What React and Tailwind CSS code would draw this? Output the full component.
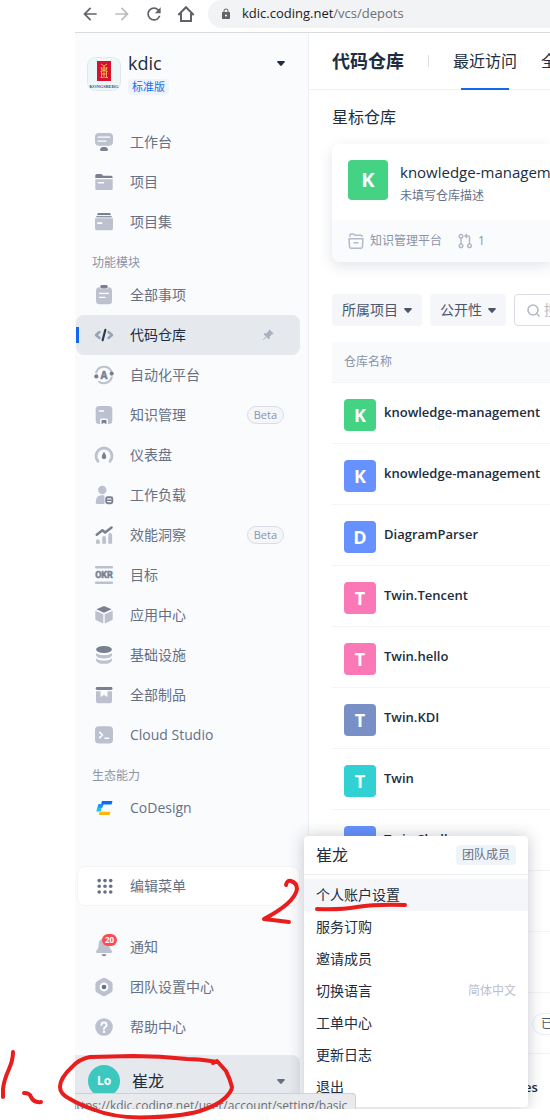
import React from "react";
import { MdArrowBack, MdArrowForward, MdRefresh, MdLock } from "react-icons/md";
import { BsPinAngleFill } from "react-icons/bs";

const L = "#bbc1ce";
const D = "#788091";

function Icon({ children }) {
  return (
    <svg viewBox="0 0 20 20" className="size-5 shrink-0" fill="none" strokeLinecap="round" strokeLinejoin="round" aria-hidden="true">
      {children}
    </svg>
  );
}

const icons = {
  desk: (
    <Icon>
      <rect x="1" y="1" width="18" height="12.7" rx="4" fill={L} />
      <path d="M4 5.2h12M4 9.2h8" stroke="#fff" strokeWidth="1.2" />
      <path d="M8.5 15h3q2.5.6 2.5 2.6 0 1.4-1.6 1.4H7.6Q6 19 6 17.6 6 15.600 8.500 15z" fill={D} />
    </Icon>
  ),
  folder: (
    <Icon>
      <path d="M1.300 3.500Q1.300 2 2.800 2h4.200q.8 0 1.300.8t1.300.9h7.600q1.500 0 1.500 2.300H1.300z" fill={D} />
      <path d="M1.300 7.300h17.400v9.200q0 1.500-1.500 1.500H2.800q-1.500 0-1.500-1.500z" fill={L} />
      <path d="M4.500 10.700h5" stroke="#fff" strokeWidth="1.600" />
    </Icon>
  ),
  folders: (
    <Icon>
      <path d="M4 .9h12l1 2H3z" fill={D} />
      <path d="M2.300 3.900h15.400v1.500H2.300z" fill="#8f96a6" />
      <path d="M1 6.300h18v10.200q0 1.700-1.500 1.700h-15Q1 18.200 1 16.500z" fill={L} />
      <path d="M4 11.200h3.500" stroke="#fff" strokeWidth="1.800" />
    </Icon>
  ),
  clipboard: (
    <Icon>
      <rect x="2" y="2.300" width="16" height="17" rx="3.500" fill={L} />
      <rect x="5.600" y="-.5" width="8.800" height="4.600" rx="2" fill="#fafbfd" />
      <rect x="6.300" y="0" width="7.400" height="3.400" rx="1.400" fill={D} />
      <path d="M5.500 8.300h9M5.500 12.300h5.500" stroke="#fff" strokeWidth="1.300" />
    </Icon>
  ),
  code: (
    <Icon>
      <path d="M5.500 7L2 10l3.500 3M14.500 7l3.500 3-3.500 3" stroke="#9aa2b3" strokeWidth="2.500" />
      <path d="M11.400 4.800l-2.800 10.400" stroke="#2f3a50" strokeWidth="2.200" />
    </Icon>
  ),
  auto: (
    <Icon>
      <path d="M2.200 7.300A8.200 8.200 0 0 1 17.300 6.200M17.800 12.300A8.200 8.200 0 0 1 5.300 16.800" stroke={L} strokeWidth="2.100" />
      <circle cx="2.300" cy="11.400" r="2.100" fill={D} />
      <circle cx="17.700" cy="8.600" r="2.100" fill={D} />
      <text x="10" y="13.600" textAnchor="middle" fontSize="10" fontWeight="700" fill={D} stroke={D} strokeWidth=".5" className="font-['Open_Sans',sans-serif]">A</text>
    </Icon>
  ),
  book: (
    <Icon>
      <rect x="1.700" y="1" width="16.600" height="18" rx="3.500" fill={L} />
      <path d="M5.500 6h4" stroke="#fff" strokeWidth="1.600" />
      <path d="M6 19.500v-4.500q0-1.500 1.500-1.500h5q1.500 0 1.500 1.500v4.500z" fill="#fafbfd" />
      <path d="M7.600 15h4.800v4.300l-2.400-1.500-2.400 1.500z" fill={D} />
    </Icon>
  ),
  gauge: (
    <Icon>
      <path d="M4 16.300A8 8 0 1 1 16 16.300" stroke={L} strokeWidth="2.800" />
      <path d="M10 6.600c.9 2 2.200 3.700 2.200 5.300a2.200 2.200 0 0 1-4.400 0c0-1.600 1.300-3.300 2.200-5.300z" fill={D} />
    </Icon>
  ),
  workload: (
    <Icon>
      <circle cx="8.300" cy="5" r="4.200" fill={L} />
      <path d="M1.700 17.500q0-7.200 6-7.200h1.800q1 0 1 1V19H3.200q-1.500 0-1.500-1.500z" fill={L} />
      <rect x="12.200" y="12.200" width="6.100" height="6.100" rx="1.500" stroke={D} strokeWidth="1.900" />
      <path d="M13.500 15.200h3.500" stroke={D} strokeWidth="1.500" />
    </Icon>
  ),
  insight: (
    <Icon>
      <path d="M2.700 9.700l5.700-4.500 2.700 2.300 6.500-5" stroke={D} strokeWidth="2.500" />
      <path d="M2 16q0-1.800 1.900-1.800T5.800 16v2.700H2zM8.200 13q0-2 1.900-2t1.900 2v5.700H8.200zM14.300 10q0-2 1.900-2t1.900 2v8.700h-3.800z" fill={L} />
    </Icon>
  ),
  okr: (
    <Icon>
      <rect x="1" y="1" width="18" height="2.600" rx="1" fill={L} />
      <rect x="1" y="16.400" width="18" height="2.600" rx="1" fill={L} />
      <text x="10" y="13.300" textAnchor="middle" fontSize="9" fontWeight="700" fill={D} stroke={D} strokeWidth=".5" className="font-['Roboto',sans-serif]">OKR</text>
    </Icon>
  ),
  cube: (
    <Icon>
      <path d="M10 1l7.600 3.300L10 7.700 2.400 4.300z" fill={D} />
      <path d="M1.300 5.800L9.300 9.300v9.200l-7.200-3.300q-.8-.4-.8-1.300zM18.700 5.800l-8 3.500v9.200l7.200-3.300q.8-.4.8-1.300z" fill={L} />
    </Icon>
  ),
  database: (
    <Icon>
      <ellipse cx="10" cy="4.500" rx="8" ry="3.500" fill={D} />
      <path d="M2 8.300q3 2 8 2t8-2v1.900q-1.500 3.300-8 3.300T2 10.200zM2 13.500q3 2.300 8 2.300t8-2.300v1.900q-1.500 3.400-8 3.400t-8-3.400z" fill={L} />
    </Icon>
  ),
  artifact: (
    <Icon>
      <rect x="1.700" y="2" width="16.800" height="3" rx="1.400" fill={D} />
      <path d="M2 6.200h4.500v5.300q0 .8.700.3L10 9.700l2.800 2.100q.7.500.7-.3V6.200H18v10.100q0 2-2 2H4q-2 0-2-2z" fill={L} />
    </Icon>
  ),
  terminal: (
    <Icon>
      <rect x="1" y="1.200" width="18" height="17.400" rx="3.800" fill={L} />
      <path d="M5.700 7.300L8.500 10l-2.800 2.700M11 13.300h3.500" stroke="#fff" strokeWidth="1.600" />
    </Icon>
  ),
  codesign: (
    <Icon>
      <path d="M8 3h10.500l-1 3.600H7z" fill="#0a6cff" />
      <path d="M4.500 6h5.200L8.200 10H3.400z" fill="#1f8cff" />
      <path d="M3.200 9.500h4.500l-1 4H2.300z" fill="#14c8f5" />
      <path d="M5.500 13.700h11l-1 3.400H4.700z" fill="#ffb80c" />
    </Icon>
  ),
  grid: (
    <Icon>
      {[4.600, 10.300, 16].map((y) => [5.200, 11, 16.700].map((x) => <circle key={x + "-" + y} cx={x} cy={y} r="1.800" fill="#667085" />))}
    </Icon>
  ),
  bell: (
    <Icon>
      <path d="M10 1.500c-3.300 0-5.300 2.500-5.300 5.500 0 3.500-.7 5-2.200 6.500-1 1.100-.8 2.500.8 2.500h13.400c1.600 0 1.800-1.400.8-2.500-1.500-1.500-2.200-3-2.200-6.500 0-3-2-5.500-5.300-5.500z" fill={L} />
      <path d="M7.500 17.200h5q-.5 2.100-2.500 2.100t-2.500-2.100z" fill={D} />
    </Icon>
  ),
  hex: (
    <Icon>
      <path d="M8.400 1.300q1.600-.9 3.200 0l5.400 3q1.600.9 1.600 2.700v6q0 1.800-1.600 2.700l-5.400 3q-1.600.9-3.200 0l-5.400-3Q1.400 14.800 1.400 13V7q0-1.800 1.600-2.700z" fill={L} />
      <circle cx="10" cy="10" r="4.400" fill="#fff" />
      <circle cx="10" cy="10" r="2.300" fill="#667085" />
    </Icon>
  ),
  help: (
    <Icon>
      <circle cx="10" cy="10" r="8.800" fill={L} />
      <path d="M7.400 8q0-2.500 2.600-2.500T12.600 8q0 1.200-1.300 2T10 12" stroke="#fff" strokeWidth="1.900" />
      <circle cx="10" cy="14.700" r="1.200" fill="#fff" />
    </Icon>
  ),
};

function Caret({ className }) {
  return (
    <svg viewBox="0 0 8 5" className={"h-[5px] w-2 shrink-0 " + className} fill="currentColor" aria-hidden="true">
      <path d="M1 0h6q1.300.2.600 1.200L4.800 4.600q-.8.700-1.600 0L.4 1.200Q-.3.200 1 0z" />
    </svg>
  );
}

function NavItem({ icon, label, active, beta, badge }) {
  return (
    <a
      href="#"
      className={
        "relative mr-2 ml-px flex h-10 shrink-0 items-center rounded-lg pr-4 pl-[18px] text-sm " +
        (active ? "bg-[#e5e8ed] text-[#202d40]" : "text-[#667085]")
      }
    >
      {active && <span className="absolute top-3 left-0 h-4 w-[3px] bg-[#1268ec]" />}
      {icons[icon]}
      {badge && (
        <span className="absolute top-[7px] left-[26px] h-3 rounded-full bg-[#ff4b50] px-[3px] text-[8px] leading-3 font-bold text-white">{badge}</span>
      )}
      <span className="ml-4 flex-1">{label}</span>
      {active && <BsPinAngleFill className="mr-2.5 size-3 text-[#a9b1c0]" />}
      {beta && (
        <span className="rounded-full border border-[#dadde5] bg-[#f5f6fa] px-1.5 text-[11px] leading-4 text-[#8b93a7]">Beta</span>
      )}
    </a>
  );
}

function NavLabel({ children }) {
  return <h2 className="h-[33px] shrink-0 pt-[13px] pl-[17px] text-xs leading-4 text-[#8b93a7]">{children}</h2>;
}

function TeamLogo() {
  return (
    <svg viewBox="0 0 34 34" className="size-[34px] shrink-0" aria-hidden="true">
      <rect x=".5" y=".5" width="33" height="33" rx="8" fill="#eef7f8" stroke="#e2e8ea" />
      <rect x="10" y="4" width="14" height="20" fill="#d8102f" />
      <path d="M14 7l3 2 3-2M13.500 11h7M14.500 10v3h5v-3M13.500 14.500q3.500-2 7 0M14.500 14v6M19.500 14v6M13.500 20.500h2.500M18 20.500h3M15 17h4M17 9v12" stroke="#f2b04a" strokeWidth="1" fill="none" />
      <text x="17" y="31" textAnchor="middle" fontSize="4.500" fontWeight="700" fill="#37506b" className="font-['Liberation_Serif',serif]">KONGSBERG</text>
    </svg>
  );
}

function Sidebar() {
  return (
    <aside className="flex w-[234px] shrink-0 flex-col border-r border-[#eceef2] bg-[#fafbfd] shadow-[2px_0_6px_rgba(30,50,80,0.05)]">
      <div className="flex h-[89px] shrink-0 items-start pt-6 pr-[23px] pl-3">
        <TeamLogo />
        <div className="-mt-1 ml-[7px] flex-1">
          <div className="text-lg leading-5 font-medium text-[#202d40]">kdic</div>
          <span className="inline-block rounded-sm bg-[#eff4fb] px-1 text-[11px] leading-4 text-[#1a6df0]">标准版</span>
        </div>
        <button type="button" aria-label="kdic" className="pt-1 text-[#202d40]">
          <Caret className="" />
        </button>
      </div>
      <nav className="flex min-h-0 flex-1 flex-col overflow-hidden">
        <NavItem icon="desk" label="工作台" />
        <NavItem icon="folder" label="项目" />
        <NavItem icon="folders" label="项目集" />
        <NavLabel>功能模块</NavLabel>
        <NavItem icon="clipboard" label="全部事项" />
        <NavItem icon="code" label="代码仓库" active />
        <NavItem icon="auto" label="自动化平台" />
        <NavItem icon="book" label="知识管理" beta />
        <NavItem icon="gauge" label="仪表盘" />
        <NavItem icon="workload" label="工作负载" />
        <NavItem icon="insight" label="效能洞察" beta />
        <NavItem icon="okr" label="目标" />
        <NavItem icon="cube" label="应用中心" />
        <NavItem icon="database" label="基础设施" />
        <NavItem icon="artifact" label="全部制品" />
        <NavItem icon="terminal" label="Cloud Studio" />
        <NavLabel>生态能力</NavLabel>
        <NavItem icon="codesign" label="CoDesign" />
      </nav>
      <button type="button" className="mr-2 ml-0.5 flex h-10 shrink-0 items-center gap-4 rounded-lg border border-[#f3f4f8] bg-white pl-4 text-sm text-[#667085]">
        {icons.grid}
        编辑菜单
      </button>
      <div className="mt-[21px] flex shrink-0 flex-col">
        <NavItem icon="bell" label="通知" badge="20" />
        <NavItem icon="hex" label="团队设置中心" />
        <NavItem icon="help" label="帮助中心" />
      </div>
      <button type="button" className="mt-2 mr-2 flex h-[54px] shrink-0 items-center rounded-tr-lg bg-[#e5e8ed] pr-[15px] pb-0.5 pl-[13px] text-base text-[#202d40]">
        <span className="flex size-8 items-center justify-center rounded-full bg-[#3cc7bf] text-xs font-bold text-white">Lo</span>
        <span className="ml-3 flex-1 text-left">崔龙</span>
        <Caret className="text-[#667085]" />
      </button>
    </aside>
  );
}

const repos = [
  { letter: "K", name: "knowledge-management", color: "bg-[#44d285]" },
  { letter: "K", name: "knowledge-management", color: "bg-[#6691ff]" },
  { letter: "D", name: "DiagramParser", color: "bg-[#6691ff]" },
  { letter: "T", name: "Twin.Tencent", color: "bg-[#fb78b7]" },
  { letter: "T", name: "Twin.hello", color: "bg-[#fb78b7]" },
  { letter: "T", name: "Twin.KDI", color: "bg-[#7990c6]" },
  { letter: "T", name: "Twin", color: "bg-[#31d0d2]" },
  { letter: "T", name: "Twin.Shell", color: "bg-[#6691ff]" },
  {},
  {},
  { chip: "已" },
  { tail: "es" },
];

function RepoRow({ letter, name, color, chip, tail }) {
  return (
    <tr className="border-b border-[#f3f4f6]">
      <td className="h-[61px] p-0 pt-1 pl-3">
        {name && (
          <div className="flex items-center gap-2">
            <span className={"flex size-8 shrink-0 items-center justify-center rounded text-lg font-bold text-white " + color}>{letter}</span>
            <a href="#" className="pb-1 text-[13px] font-semibold whitespace-nowrap text-[#202d40]">{name}</a>
          </div>
        )}
        {chip && (
          <div className="pb-1 pl-[188px]">
            <span className="inline-block rounded-full border border-[#eceef2] px-2 text-xs leading-5 text-[#4a5568]">{chip}</span>
          </div>
        )}
        {tail && <a href="#" className="pl-[180px] text-[13px] font-semibold text-[#202d40]">{tail}</a>}
      </td>
    </tr>
  );
}

function Main() {
  return (
    <main className="min-w-0 flex-1 overflow-hidden bg-white">
      <header className="flex h-[57px] items-center border-b border-[#f1f2f5] pl-[23px] whitespace-nowrap text-[#202d40]">
        <h1 className="text-lg font-bold">代码仓库</h1>
        <span className="ml-6 h-3 w-px shrink-0 bg-[#dadde5]" />
        <a href="#" className="relative ml-6 flex h-[57px] shrink-0 items-center text-base">
          最近访问
          <span className="absolute inset-x-2 bottom-0 h-0.5 bg-[#1268ec]" />
        </a>
        <a href="#" className="ml-6 text-base">全部</a>
      </header>
      <div className="pl-[23px]">
        <h2 className="pt-[15px] text-base text-[#202d40]">星标仓库</h2>
        <section className="mt-[15px] rounded-l-lg shadow-[0_4px_14px_rgba(30,50,90,0.13)]">
          <div className="flex h-[76px] items-start gap-3 pt-4 pl-4">
            <span className="flex size-10 shrink-0 items-center justify-center rounded bg-[#44d285] text-xl font-bold text-white">K</span>
            <div className="whitespace-nowrap">
              <div className="text-[15px] leading-6 font-medium text-[#202d40]">knowledge-management</div>
              <div className="pt-1 text-xs text-[#667085]">未填写仓库描述</div>
            </div>
          </div>
          <div className="flex h-[42px] items-center rounded-bl-lg bg-[#fafbfd] pl-4 text-xs text-[#8b93a7]">
            <svg viewBox="0 0 16 16" className="size-4" fill="none" stroke="#b3bac8" strokeWidth="1.500" strokeLinejoin="round" aria-hidden="true">
              <path d="M2 4V2.200Q2 1 3.200 1h2.300l1.500 1.300h6Q14 2.300 14 3.500V4M1 5.700h14l-.6 8q-.1 1.500-1.500 1.500H3.100q-1.400 0-1.500-1.500zM5.500 9.700h5" />
            </svg>
            <span className="ml-1.5">知识管理平台</span>
            <svg viewBox="0 0 14 16" className="ml-4 h-4 w-3.5" fill="none" stroke="#b3bac8" strokeWidth="1.500" aria-hidden="true">
              <circle cx="3" cy="3.200" r="1.800" />
              <circle cx="3" cy="12.800" r="1.800" />
              <circle cx="11.500" cy="12.800" r="1.800" />
              <path d="M3 5v6M11.500 11V4.200Q11.500 3 10.300 3H7.300M9 1L7 3l2 2" />
            </svg>
            <span className="ml-1.5">1</span>
          </div>
        </section>
        <div className="mt-8 flex h-8 gap-2 text-sm whitespace-nowrap text-[#4c566a]">
          <button type="button" className="flex shrink-0 items-center gap-1.5 rounded bg-[#f5f6fa] px-2.5">
            所属项目
            <Caret className="" />
          </button>
          <button type="button" className="flex shrink-0 items-center gap-1.5 rounded bg-[#f5f6fa] px-2.5">
            公开性
            <Caret className="" />
          </button>
          <label className="flex w-60 shrink-0 items-center gap-1 rounded border border-[#dadde5] pl-3">
            <svg viewBox="0 0 13 13" className="size-[13px] shrink-0" fill="none" stroke="#b3bac8" strokeWidth="1.600" strokeLinecap="round" aria-hidden="true">
              <circle cx="6" cy="6" r="5" />
              <path d="M10 10l2 2" />
            </svg>
            <input type="text" placeholder="搜索" aria-label="搜索" className="w-40 bg-transparent text-sm outline-none placeholder:text-[#b3bac8]" />
          </label>
        </div>
        <table className="mt-4 w-full border-collapse text-left">
          <thead>
            <tr className="border-b border-[#f3f4f6] bg-[#f9fafc]">
              <th className="h-10 p-0 pl-3 text-xs font-normal text-[#8b93a7]">仓库名称</th>
            </tr>
          </thead>
          <tbody>
            {repos.map((r, i) => (
              <RepoRow key={i} {...r} />
            ))}
          </tbody>
        </table>
      </div>
    </main>
  );
}

const menu = ["个人账户设置", "服务订购", "邀请成员", "切换语言", "工单中心", "更新日志", "退出"];

function UserMenu() {
  return (
    <div className="absolute bottom-0.5 left-[229px] w-56 rounded bg-white pb-1 text-[#202d40] shadow-[0_0_16px_rgba(30,40,60,0.25)]">
      <div className="mb-1 flex h-[39px] items-center justify-between border-b border-[#eceef2] px-3">
        <span className="text-base">崔龙</span>
        <span className="rounded bg-[#eff3fa] px-1.5 text-xs leading-5 text-[#667085]">团队成员</span>
      </div>
      {menu.map((label, i) => (
        <button key={label} type="button" className={"flex h-8 w-full items-center justify-between px-3 text-sm " + (i === 0 ? "bg-[#f5f6fa]" : "")}>
          {label}
          {label === "切换语言" && <span className="text-xs text-[#b9c0cd]">简体中文</span>}
        </button>
      ))}
    </div>
  );
}

function Toolbar() {
  return (
    <div className="flex h-[33px] shrink-0 items-start gap-3 border-b border-[#d9dbdf] pl-[5px] text-[#5f6368]">
      <button type="button" aria-label="←" className="pt-1"><MdArrowBack className="size-5" /></button>
      <button type="button" aria-label="→" className="pt-1 text-[#babcbe]"><MdArrowForward className="size-5" /></button>
      <button type="button" aria-label="↻" className="pt-1"><MdRefresh className="size-5" /></button>
      <button type="button" aria-label="⌂" className="pt-1">
        <svg viewBox="0 0 20 20" className="size-5" fill="none" stroke="currentColor" strokeWidth="2" aria-hidden="true">
          <path d="M2.300 11L10 3.200 17.700 11M5 9v8h10V9" />
        </svg>
      </button>
      <div className="flex h-7 min-w-0 flex-1 items-center gap-2.5 rounded-bl-2xl rounded-tl-2xl bg-[#f1f3f4] pl-3">
        <MdLock className="size-3 shrink-0" />
        <span className="text-[13px] text-[#6b7075]"><span className="text-[#202124]">kdic.coding.net</span>/vcs/depots</span>
      </div>
    </div>
  );
}

export default function App() {
  return (
    <div className="relative flex h-screen flex-col overflow-hidden bg-white pb-[11px] pl-[75px] font-['Open_Sans','Noto_Sans_CJK_SC',sans-serif]">
      <Toolbar />
      <div className="relative flex min-h-0 flex-1 overflow-hidden">
        <Sidebar />
        <Main />
        <UserMenu />
        <div className="absolute bottom-0 left-0 h-4 overflow-hidden rounded-tr border-t border-r border-[#cfd1d5] bg-[#e8eaed] pr-2 text-xs leading-6 text-[#6b7075]">
          <span className="-ml-1.5 block">https://kdic.coding.net/user/account/setting/basic</span>
        </div>
      </div>
      <svg viewBox="0 0 550 1120" className="pointer-events-none absolute bottom-0 left-0 h-[1120px] w-[550px]" fill="none" stroke="#e81d1d" strokeWidth="4" strokeLinecap="round" strokeLinejoin="round" aria-hidden="true">
        <path d="M217 1062Q200 1059 187 1059 160 1056 133 1056L90 1057Q79 1059 72 1067 60 1078 60 1087 60 1094 70 1099 80 1105 95 1110 112 1117 140 1117.500 180 1117 200 1111 218 1105 225 1098 232 1091 232 1087 230 1079 226 1071L217 1061 213 1063" />
        <path d="M13 1052Q13 1060 9 1069 4 1080 3 1089V1097M24 1093Q30 1093 31 1097 34 1103 41 1102" />
        <path d="M286 885Q287 880 291 881 297 883 297 889 296 896 287 904 279 911 264 919L289 922" />
        <path d="M317 909Q340 910 357 907 376 904 405 905" />
      </svg>
    </div>
  );
}
